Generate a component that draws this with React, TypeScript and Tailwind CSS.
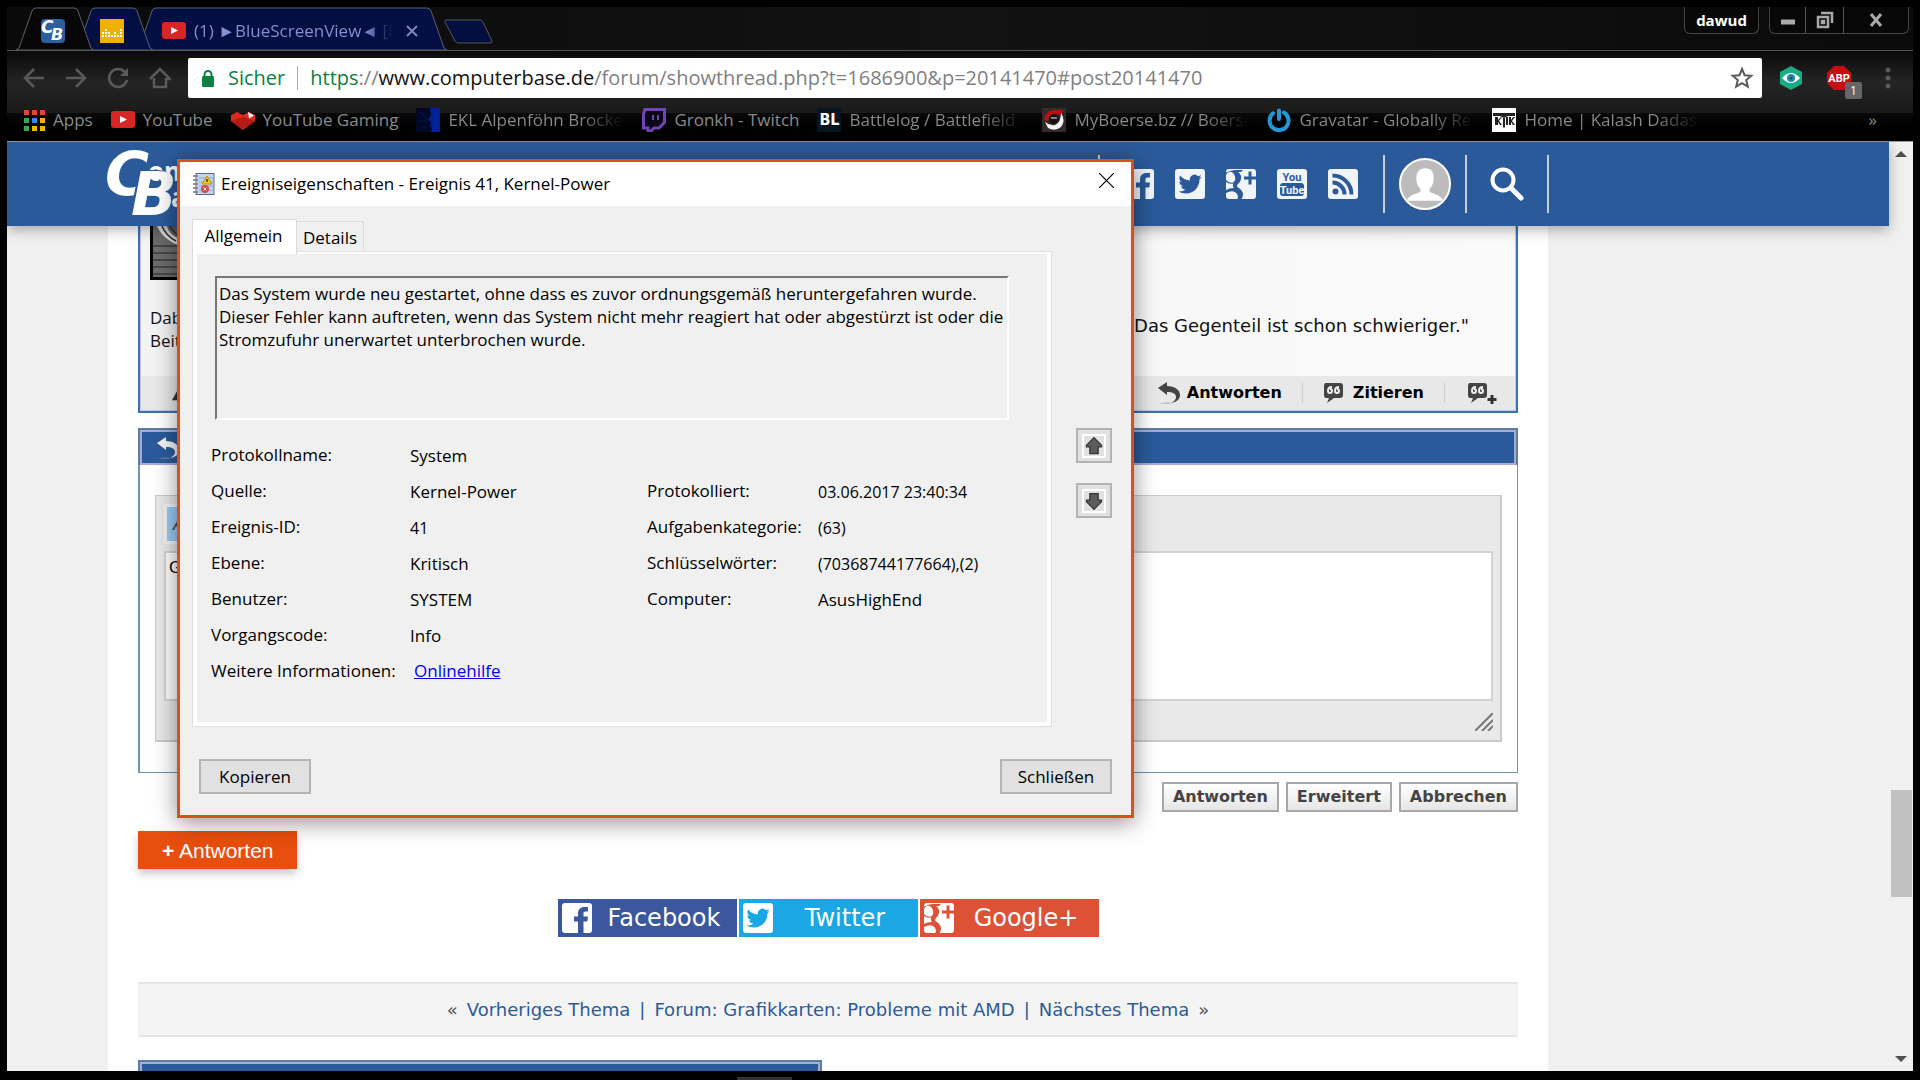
import React from "react";

type Kids = { children?: React.ReactNode };

/* ---------- Icons ---------- */

const YouTubeIcon = () => (
  <svg viewBox="0 0 24 24" className="size-6 shrink-0" aria-hidden="true">
    <rect x="0" y="3" width="24" height="17" rx="3" fill="#d92525" />
    <path d="M9 8l7 3.500-7 3.500z" fill="#fff" />
  </svg>
);

const CbIcon = () => (
  <span className="relative block size-6 rounded-sm bg-[#2b5f9f] font-['DejaVu_Sans',sans-serif] font-bold text-white italic leading-none" aria-hidden="true">
    <span className="absolute left-0 top-0 text-[17px]">C</span>
    <span className="absolute left-2.5 top-2 text-[16px]">B</span>
  </span>
);

const DeezerIcon = () => (
  <svg viewBox="0 0 24 24" className="size-6" aria-hidden="true">
    <rect width="24" height="24" fill="#f0b000" />
    <g fill="#fff">
      {[[2, 2], [5, 3], [8, 2], [11, 1], [14, 2], [17, 1], [20, 3]].map(([x, n]) =>
        Array.from({ length: n }, (_, i) => <rect key={`${x}-${i}`} x={x} y={16 - i * 3} width="2" height="2" />)
      )}
    </g>
  </svg>
);

const AppsIcon = () => {
  const colors = ["#e8433a", "#e8433a", "#e8433a", "#3aa757", "#2d8cf0", "#f4b400", "#3aa757", "#f4b400", "#f4b400"];
  return (
    <svg viewBox="0 0 21 21" className="size-[21px] shrink-0" aria-hidden="true">
      {colors.map((c, i) => (
        <rect key={i} x={(i % 3) * 8} y={Math.floor(i / 3) * 8} width="5" height="5" fill={c} />
      ))}
    </svg>
  );
};

const GamingIcon = () => (
  <svg viewBox="0 0 24 24" className="size-6 shrink-0" aria-hidden="true">
    <path d="M0 7l6-3 6 3 6-3 6 3v6l-12 9L0 13z" fill="#e0281f" />
    <path d="M0 13l12-4 12 4-12 9z" fill="#b31c14" />
    <path d="M17 4l6 3.500-5 3z" fill="#fff" />
  </svg>
);

const EklIcon = () => (
  <svg viewBox="0 0 24 24" className="size-6 shrink-0" aria-hidden="true">
    <rect width="24" height="24" fill="#020824" />
    <path d="M14 0h10v24H15l1-4-2-2 1-4-3-2 3-5z" fill="#00209a" />
    <path d="M2 3q6 2 8 8M3 14q4-4 8 1M4 21q3-4 7-2" stroke="#001a66" fill="none" />
  </svg>
);

const TwitchIcon = () => (
  <svg viewBox="0 0 24 24" className="size-6 shrink-0" aria-hidden="true">
    <path d="M3 1.500h19.500v13L17 20h-5l-3 3H6v-3H1.500V6z" fill="#0c0618" stroke="#6f45b5" strokeWidth="3" />
    <path d="M11 7v5M16 7v5" stroke="#6f45b5" strokeWidth="2" />
  </svg>
);

const BattlelogIcon = () => (
  <span className="grid size-6 shrink-0 place-items-center bg-[#061520] font-['DejaVu_Sans_Condensed','DejaVu_Sans',sans-serif] text-base font-bold leading-none text-white" aria-hidden="true">BL</span>
);

const BoerseIcon = () => (
  <svg viewBox="0 0 24 24" className="size-6 shrink-0" aria-hidden="true">
    <rect width="24" height="24" fill="#332b2b" />
    <path d="M2 12Q3 3 12 2h10l-3 5Q7 4 6 13z" fill="#c00d12" />
    <path d="M19 5q5 8 0 14-6 5-13 1l-3-6q5 4 10 3 6-3 6-12z" fill="#f4f4f4" />
    <circle cx="12" cy="11" r="5" fill="#171212" />
    <path d="M9 10h6" stroke="#8d7f7f" strokeWidth="2" />
  </svg>
);

const GravatarIcon = () => (
  <svg viewBox="0 0 24 24" className="size-6 shrink-0" fill="none" stroke="#2597d8" strokeWidth="4" strokeLinecap="round" aria-hidden="true">
    <path d="M12 2.500v8.500M17 4.500a9.500 9.500 0 1 1-11 .800" />
  </svg>
);

const KalashIcon = () => (
  <svg viewBox="0 0 24 24" className="size-6 shrink-0" aria-hidden="true">
    <rect width="24" height="24" fill="#fff" />
    <path d="M1 5h22v3h-7l-4 2-4-2H1zM3 9h3v3l3-3h1l-3 4 3 4H8l-2-3v3H3zM11 10h2v9l-1 1-1-1zM14 9h2v8h-2zM17 9h2v3l2-3h2l-3 4 3 4h-2l-2-3v3h-2z" fill="#222" />
  </svg>
);

const BIRD =
  "M23.953 4.57a10 10 0 01-2.825.775 4.958 4.958 0 002.163-2.723c-.951.555-2.005.959-3.127 1.184a4.92 4.92 0 00-8.384 4.482C7.69 8.095 4.067 6.13 1.64 3.162a4.822 4.822 0 00-.666 2.475c0 1.71.87 3.213 2.188 4.096a4.904 4.904 0 01-2.228-.616v.06a4.923 4.923 0 003.946 4.827 4.996 4.996 0 01-2.212.085 4.936 4.936 0 004.604 3.417 9.867 9.867 0 01-6.102 2.105c-.39 0-.779-.023-1.17-.067a13.995 13.995 0 007.557 2.209c9.053 0 13.998-7.496 13.998-13.985 0-.21 0-.42-.015-.63A9.935 9.935 0 0024 4.59z";

type Glyph = "facebook" | "twitter" | "google" | "youtube" | "rss";

const SocialIcon = ({ kind, fill, ink }: { kind: Glyph; fill: string; ink: string }) => (
  <svg viewBox="0 0 30 30" className="size-[30px] shrink-0" aria-hidden="true">
    <rect width="30" height="30" rx="3" fill={fill} />
    {kind === "facebook" && (
      <path d="M16 30V18.500h-4V13.500h4V10.500C16 6.500 18.500 4 22.500 4H26v4.500h-2.500c-1.500 0-2 .7-2 2v3H26l-.700 5h-3.800V30z" fill={ink} />
    )}
    {kind === "twitter" && <path d={BIRD} transform="translate(3.500 3.500) scale(.97)" fill={ink} />}
    {kind === "google" && (
      <g fill={ink}>
        <path d="M0 3.500Q5 1 9 1h8l-2 2h-3q4 3 3 7-.500 3-3 5-2 2 0 3.500 5 3 5 7 0 2.500-1.500 4.500h-4q1.500-4-2-6.500Q6 21 0 24v-3q3-2 8-2-2-2-.500-4.500Q3 15.500 0 13v-2q3 3.500 7 2.500 3-1.500 2-6Q7 2 3 3 1 3.500 0 6z" />
        <path d="M22.500 2.500h3v5H30v3h-4.500v5h-3v-5H18v-3h4.500z" />
      </g>
    )}
    {kind === "youtube" && (
      <g fontFamily="Roboto, sans-serif" fontWeight="700" textAnchor="middle">
        <rect x="3" y="14" width="24" height="13" rx="3" fill={ink} />
        <text x="15" y="12" fontSize="11" fill={ink}>You</text>
        <text x="15" y="25" fontSize="11" fill={fill}>Tube</text>
      </g>
    )}
    {kind === "rss" && (
      <g fill="none" stroke={ink} strokeWidth="4">
        <circle cx="7.500" cy="22.500" r="3" fill={ink} stroke="none" />
        <path d="M4.500 13.500A12 12 0 0 1 16.500 25.500M4.500 6.500A19 19 0 0 1 23.500 25.500" />
      </g>
    )}
  </svg>
);

const ReplyIcon = ({ color }: { color: string }) => (
  <svg viewBox="0 0 24 24" className="size-6 shrink-0" aria-hidden="true">
    <path d="M1 7l9-6v4c8 0 13 4 13 9 0 4-3 7-9 8 4-2 5-4 5-6 0-3-3-5-9-5v3z" fill={color} />
    <path d="M2 23q6-3 13-1l-2 1z" fill="#999" opacity=".5" />
  </svg>
);

const QuoteIcon = ({ plus = false }: { plus?: boolean }) => (
  <svg viewBox={plus ? "0 0 30 24" : "0 0 22 24"} className={plus ? "h-6 w-[30px]" : "h-6 w-[22px]"} aria-hidden="true">
    <path d="M3 2h14q3 0 3 3v9q0 3-3 3h-6l-7 5 2-5H3q-2 0-2-3V5q0-3 2-3z" fill="#444" />
    <path d="M9 6q-4 0-4 4a2 2 0 1 0 2-2M16 6q-4 0-4 4a2 2 0 1 0 2-2" stroke="#eee" strokeWidth="2" fill="none" />
    {plus && <path d="M25 14v9M20.500 18.500h9" stroke="#333" strokeWidth="3" />}
  </svg>
);

const ArrowIcon = ({ down = false }: { down?: boolean }) => (
  <svg viewBox="0 0 24 24" className={down ? "size-6 rotate-180 border-2 border-white" : "size-6 border-2 border-white"} aria-hidden="true">
    <path d="M12 2l9 9v2h-4v8H7v-8H3v-2z" fill="#5c5c5c" stroke="#333" strokeWidth="1.500" />
  </svg>
);

/* ---------- Browser chrome ---------- */

const TabShape = ({ width, fill }: { width: number; fill: string }) => (
  <svg viewBox={`0 0 ${width} 43`} className="absolute inset-0 size-full" aria-hidden="true">
    <path
      d={`M0 43l3-2L16 4q1-3 4-3h${width - 40}q3 0 4 3l13 37 3 2z`}
      fill={fill}
      stroke="#59606f"
    />
  </svg>
);

const tabBase = "relative flex h-[43px] shrink-0 items-center";

function TabStrip() {
  return (
    <div className="flex h-11 items-start border-b border-[#555] bg-[#0d0d0d] bg-linear-to-r from-[#0a0a0a] via-[#121212] to-[#0b0b0b] pl-[9px]">
      <button className={`${tabBase} z-20 w-[78px] justify-center pr-1 pt-1`} aria-label="ComputerBase">
        <TabShape width={78} fill="#070707" />
        <span className="relative"><CbIcon /></span>
      </button>
      <button className={`${tabBase} z-10 -ml-[19px] w-[78px] justify-center pr-1 pt-1`} aria-label="Deezer">
        <TabShape width={78} fill="#030e42" />
        <span className="relative"><DeezerIcon /></span>
      </button>
      <div className={`${tabBase} -ml-[17px] w-[311px] gap-2 pl-[26px] pt-1 text-[17px] text-[#7f8fd0]`}>
        <TabShape width={311} fill="#030e42" />
        <span className="relative"><YouTubeIcon /></span>
        <span className="relative w-[200px] overflow-hidden whitespace-nowrap bg-linear-to-r from-[#8493d4] from-85% to-transparent bg-clip-text text-transparent">
          (1) ►BlueScreenView◄ [B
        </span>
        <button className="relative ml-1" aria-label="Tab schließen">
          <svg viewBox="0 0 12 12" className="size-3" aria-hidden="true"><path d="M1 1l10 10M11 1L1 11" stroke="#7c89bd" strokeWidth="2" /></svg>
        </button>
      </div>
      <button className="-ml-1 mt-3" aria-label="Neuer Tab">
        <svg viewBox="0 0 50 25" className="block h-[25px] w-[50px]" aria-hidden="true">
          <path d="M3 1h34q2 0 3 2l9 19q1 2-2 2H16q-3 0-4-2L2 3Q1 1 3 1z" fill="#03103f" stroke="#555" />
        </svg>
      </button>
      <div className="ml-auto mr-1 flex h-[27px] gap-2.5">
        <button className="w-[75px] rounded-b-md border border-t-0 border-[#444] bg-[#080808] text-[15px] font-bold text-white">dawud</button>
        <div className="flex divide-x divide-[#555] rounded-b-md border border-t-0 border-[#444] bg-[#080808]">
          <button className="grid w-[36px] place-items-center" aria-label="Minimieren">
            <svg viewBox="0 0 16 16" className="size-4" aria-hidden="true"><path d="M1 10h14" stroke="#aaa" strokeWidth="5" /></svg>
          </button>
          <button className="grid w-[38px] place-items-center" aria-label="Wiederherstellen">
            <svg viewBox="0 0 18 18" className="size-[18px]" fill="none" stroke="#aaa" strokeWidth="2.500" aria-hidden="true">
              <path d="M2 6h10v10H2zM5 2h11v10M6 10h2v2H6z" />
            </svg>
          </button>
          <button className="grid w-[64px] place-items-center" aria-label="Fenster schließen">
            <svg viewBox="0 0 14 14" className="size-3.5" aria-hidden="true"><path d="M2 1l10 12M12 1L2 13" stroke="#aaa" strokeWidth="3" /></svg>
          </button>
        </div>
      </div>
    </div>
  );
}

const NavButton = ({ label, children }: Kids & { label: string }) => (
  <button aria-label={label} className="w-[22px]">
    <svg viewBox="0 0 22 22" className="size-[22px]" fill="none" stroke="#5a5a5a" strokeWidth="2.500" aria-hidden="true">{children}</svg>
  </button>
);

function Toolbar() {
  return (
    <div className="flex h-[62px] items-center bg-linear-to-b from-[#0a0a0a] via-[#242424] to-[#1a1a1a] pl-4 pr-[22px] pb-2">
      <nav className="flex gap-5">
        <NavButton label="Zurück"><path d="M21 11H2M11 2l-9 9 9 9" /></NavButton>
        <NavButton label="Vor"><path d="M1 11h19M11 2l9 9-9 9" /></NavButton>
        <NavButton label="Neu laden"><path d="M18 5a9 9 0 1 0 2 8" /><path d="M21 1v8h-8z" fill="#5a5a5a" stroke="none" /></NavButton>
        <NavButton label="Startseite"><path d="M5 11v9h12v-9M1 12L11 2l10 10h-4" /></NavButton>
      </nav>
      <div className="ml-[17px] flex h-10 min-w-0 flex-1 items-center rounded-xs bg-white pl-3.5 pr-2 text-xl">
        <svg viewBox="0 0 12 17" className="mr-3.5 h-[17px] w-3 shrink-0" aria-hidden="true">
          <rect y="6" width="12" height="11" rx="1" fill="#0b8043" />
          <path d="M2.500 7V4.500a3.500 3.500 0 0 1 7 0V7" fill="none" stroke="#0b8043" strokeWidth="2" />
        </svg>
        <span className="text-[#0b8043]">Sicher</span>
        <span className="mx-3 h-6 w-px bg-[#aaa]" />
        <a href="#post20141470" className="flex-1 truncate text-[#7f7f7f]">
          <span className="text-[#0b8043]">https</span>://<span className="text-[#111]">www.computerbase.de</span>/forum/showthread.php?t=1686900&amp;p=20141470#post20141470
        </a>
        <button aria-label="Lesezeichen">
          <svg viewBox="0 0 24 24" className="size-6" fill="none" stroke="#5a5a5a" strokeWidth="2" aria-hidden="true">
            <path d="M12 3l2.600 6.200 6.700.500-5.100 4.400 1.600 6.600L12 17.200l-5.800 3.500 1.600-6.600-5.100-4.400 6.700-.500z" />
          </svg>
        </button>
      </div>
      <div className="ml-4 flex items-center">
        <button aria-label="Blocker">
          <svg viewBox="0 0 26 26" className="size-[26px]" aria-hidden="true">
            <path d="M13 1l11 6v12l-11 6-11-6V7z" fill="#17ad84" />
            <path d="M4 13q9-10 18 0-9 10-18 0z" fill="#fff" />
            <circle cx="13" cy="13" r="4" fill="#2187b8" />
            <circle cx="13" cy="13" r="1.500" fill="#063" />
          </svg>
        </button>
        <button className="relative ml-[22px]" aria-label="Adblock Plus">
          <svg viewBox="0 0 26 26" className="size-[26px]" aria-hidden="true">
            <path d="M8 1h10l7 7v10l-7 7H8l-7-7V8z" fill="#c70d12" />
            <text x="13" y="17" fontSize="11" fontWeight="700" textAnchor="middle" fill="#fff" fontFamily="Roboto, sans-serif">ABP</text>
          </svg>
          <span className="absolute -right-2.5 -bottom-2 grid size-[17px] place-items-center rounded-xs bg-[#666] text-xs text-white">1</span>
        </button>
        <button className="ml-[33px]" aria-label="Menü">
          <svg viewBox="0 0 6 24" className="h-6 w-1.5" fill="#5a5a5a" aria-hidden="true">
            <circle cx="3" cy="4" r="2.500" /><circle cx="3" cy="12" r="2.500" /><circle cx="3" cy="20" r="2.500" />
          </svg>
        </button>
      </div>
    </div>
  );
}

const Bookmark = ({ icon, children, fade }: Kids & { icon: React.ReactNode; fade?: string }) => (
  <a href="#bookmark" className={`flex shrink-0 items-center gap-2 ${fade ?? ""}`}>
    {icon}
    {fade ? (
      <span className="min-w-0 flex-1 overflow-hidden whitespace-nowrap bg-linear-to-r from-[#8a8a8a] from-75% to-transparent bg-clip-text text-transparent">{children}</span>
    ) : (
      <span className="whitespace-nowrap">{children}</span>
    )}
  </a>
);

function Bookmarks() {
  return (
    <div className="flex h-[29px] items-start border-b border-[#9a9aa6] bg-linear-to-b from-[#0a0a0a] to-black pl-[17px] pr-[36px] text-[17px] leading-6 text-[#8a8a8a]">
      <div className="-mt-[5px] flex min-w-0 flex-1 items-center gap-[18px]">
        <Bookmark icon={<AppsIcon />}>Apps</Bookmark>
        <Bookmark icon={<YouTubeIcon />}>YouTube</Bookmark>
        <Bookmark icon={<GamingIcon />}>YouTube Gaming</Bookmark>
        <Bookmark icon={<EklIcon />} fade="w-[208px]">EKL Alpenföhn Brocke</Bookmark>
        <Bookmark icon={<TwitchIcon />}>Gronkh - Twitch</Bookmark>
        <Bookmark icon={<BattlelogIcon />} fade="w-[207px]">Battlelog / Battlefield 4</Bookmark>
        <Bookmark icon={<BoerseIcon />} fade="w-[207px]">MyBoerse.bz // Boerse</Bookmark>
        <Bookmark icon={<GravatarIcon />} fade="w-[207px]">Gravatar - Globally Re</Bookmark>
        <Bookmark icon={<KalashIcon />} fade="w-[207px]">Home | Kalash Dadash</Bookmark>
        <button className="ml-auto" aria-label="Weitere Lesezeichen">»</button>
      </div>
    </div>
  );
}

/* ---------- Forum page ---------- */

function SiteHeader() {
  return (
    <header className="relative z-10 flex h-[84px] items-center bg-[#2b5a9b] pl-[101px] pr-[340px] shadow-[0_4px_12px_rgba(0,0,0,0.3)]">
      <a href="#home" aria-label="ComputerBase" className="relative h-[72px] w-[180px] font-['DejaVu_Sans',sans-serif] font-bold leading-none text-white">
        <span className="absolute left-10 top-2.5 font-['Open_Sans',sans-serif] text-[26px]">omputer</span>
        <span className="absolute left-[63px] top-9 font-['Open_Sans',sans-serif] text-[26px]">ase</span>
        <span className="absolute -left-[3px] -top-1 text-[60px] italic">C</span>
        <span className="absolute left-[23px] top-4 text-[60px] italic [text-shadow:-2px_-1px_0_#2b5a9b]">B</span>
      </a>
      <div className="ml-auto flex h-[58px] items-center border-x-2 border-[#c9ced8] px-6">
        <div className="flex gap-[21px] pr-px">
          {(["facebook", "twitter", "google", "youtube", "rss"] as Glyph[]).map((k) => (
            <a key={k} href={`#${k}`} aria-label={k}><SocialIcon kind={k} fill="#f1f5fa" ink="#2b5a9b" /></a>
          ))}
        </div>
      </div>
      <div className="flex h-[58px] items-center border-r-2 border-[#c9ced8] px-3.5">
        <a href="#profil" aria-label="Profil" className="size-[52px] overflow-hidden rounded-full border-2 border-white bg-[#bcbcbc]">
          <svg viewBox="0 0 47 47" className="size-full" fill="#fff" aria-hidden="true">
            <path d="M24 8c6 0 8 4 8 10 0 5-2 8-4 10v3c3 2 12 3 13 9H6c1-6 10-7 13-9v-3c-2-2-4-5-4-10 0-6 3-10 9-10z" />
          </svg>
        </a>
      </div>
      <div className="flex h-[58px] items-center border-r-2 border-[#c9ced8] px-[23px]">
        <button aria-label="Suche">
          <svg viewBox="0 0 34 34" className="size-[34px]" fill="none" stroke="#fff" aria-hidden="true">
            <circle cx="13" cy="13" r="10.500" strokeWidth="4" />
            <path d="M21 21l10 10" strokeWidth="5" strokeLinecap="round" />
          </svg>
        </button>
      </div>
    </header>
  );
}

function Post() {
  return (
    <article className="border-2 border-t-0 border-[#3a73b3] bg-[#fafafa]">
      <div className="border border-t-0 border-[#c5c8e6]">
        <div className="flex h-[150px] justify-between bg-linear-to-r from-[#f3f3f3] to-[#fafafa] text-lg leading-[23px] text-[#111]">
          <div className="pl-[9px]">
            <svg viewBox="0 0 120 54" className="mb-[26px] h-[54px] w-[120px]" aria-hidden="true">
              <rect width="120" height="54" fill="#000" />
              <rect x="3" width="114" height="51" fill="#6b6b6b" />
              <path d="M3 20h114M3 27h114M3 34h114M3 41h114M3 48h114" stroke="#464646" strokeWidth="2" />
              <path d="M7 0q6 14 24 20v-6Q18 8 17 0z" fill="#e2e2e2" />
              <path d="M12 0q4 10 14 15M20 0q3 6 8 10" stroke="#333" strokeWidth="1.500" fill="none" />
            </svg>
            <p className="font-['Open_Sans',sans-serif] text-[17px] leading-[23px]">Dabei seit:<br />Beiträge:</p>
          </div>
          <p className="self-end pr-[46px] pb-[39px]">Das Gegenteil ist schon schwieriger."</p>
        </div>
        <footer className="flex h-[34px] items-center justify-between bg-[#e8e8e8] pl-[29px] pr-[18px] font-bold">
          <svg viewBox="0 0 22 20" className="h-4 w-5" aria-hidden="true"><path d="M11 1l10 18H1z" fill="#333" /></svg>
          <div className="flex items-center">
            <a href="#antworten" className="flex items-center gap-1.5"><ReplyIcon color="#444" />Antworten</a>
            <span className="mx-5 h-5 w-px bg-[#ccc]" />
            <a href="#zitieren" className="flex items-center gap-2"><QuoteIcon />Zitieren</a>
            <span className="mr-[22px] ml-5 h-5 w-px bg-[#ccc]" />
            <a href="#multizitat" aria-label="Mehrfach zitieren"><QuoteIcon plus /></a>
          </div>
        </footer>
      </div>
    </article>
  );
}

function ReplyForm() {
  return (
    <form className="mt-[15px]" onSubmit={(e) => e.preventDefault()}>
      <div className="h-[37px] border-2 border-b-0 border-[#5b7f9d]">
        <div className="flex h-full items-center border-2 border-[#a9a9d6] bg-[#2b5a9b] pl-3.5"><ReplyIcon color="#f5f5f5" /></div>
      </div>
      <div className="border border-l-2 border-t-0 border-[#6b94b3] bg-white px-[15px] pt-[30px] pb-[30px]">
        <div className="border-2 border-t border-l border-[#cacaca] bg-[#e9e9e9] pl-2 pr-[7px] pb-[9px] pt-2">
          <button type="button" aria-label="Formatierung" className="mb-[7px] block h-10 w-10 border-3 border-[#f4f4f4] bg-[#99ccf5] pl-1.5 text-left text-lg leading-none text-[#444] italic">A</button>
          <textarea
            aria-label="Nachricht"
            defaultValue="Gibt es neue Erkenntnisse?"
            className="block h-[150px] w-full resize-none border-2 border-[#d3d3d3] bg-white px-[3px] py-0.5 font-['Liberation_Sans',sans-serif] text-[17px] outline-none"
          />
          <svg viewBox="0 0 18 18" className="mt-3 ml-auto size-[18px]" stroke="#777" strokeWidth="2" aria-hidden="true"><path d="M0 18L18 0M7 18L18 7M13 18l5-5" /></svg>
        </div>
      </div>
      <div className="mt-[9px] flex justify-end gap-[7px] font-bold text-[#444]">
        {["Antworten", "Erweitert", "Abbrechen"].map((t) => (
          <button key={t} className="h-[30px] border-2 border-[#a8a8a8] bg-linear-to-b from-white to-[#e6e6e6] px-[9px] leading-none">{t}</button>
        ))}
      </div>
    </form>
  );
}

const Share = ({ kind, label, tone, ink }: { kind: Glyph; label: string; tone: string; ink: string }) => (
  <a href={`#${kind}`} className={`flex h-[38px] w-[179px] items-center pl-1 text-[24px] text-white ${tone}`}>
    <SocialIcon kind={kind} fill="#fff" ink={ink} />
    <span className="flex-1 text-center">{label}</span>
  </a>
);

function ForumPage() {
  return (
    <div className="flex min-h-0 flex-1">
      <div className="flex min-w-0 flex-1 flex-col bg-[#f0f0f0]">
        <SiteHeader />
        <main className="mr-[341px] ml-[101px] min-h-0 flex-1 overflow-hidden bg-white px-[30px] font-['DejaVu_Sans',sans-serif] text-base">
          <Post />
          <ReplyForm />
          <button className="mt-[19px] block h-[38px] bg-[#e84e0e] pl-6 pr-[23px] font-['Liberation_Sans',sans-serif] text-[21px] leading-none text-white shadow-[0_5px_8px_rgba(0,0,0,0.2)]">
            <b>+</b> Antworten
          </button>
          <div className="mt-[30px] flex justify-center gap-0.5">
            <Share kind="facebook" label="Facebook" tone="bg-[#3b579d]" ink="#3b579d" />
            <Share kind="twitter" label="Twitter" tone="bg-[#1aa7e4]" ink="#1aa7e4" />
            <Share kind="google" label="Google+" tone="bg-[#dd5137]" ink="#dd5137" />
          </div>
          <nav className="mt-[45px] flex h-[55px] items-center justify-center gap-[9px] border-y-2 border-[#e6e6e6] bg-[#f4f4f4] text-lg text-[#2b5a9b]">
            <span className="text-[#555]">«</span>
            <a href="#zurueck">Vorheriges Thema</a>
            <span>|</span>
            <a href="#forum">Forum: Grafikkarten: Probleme mit AMD</a>
            <span>|</span>
            <a href="#weiter">Nächstes Thema</a>
            <span className="text-[#555]">»</span>
          </nav>
          <div className="mt-[23px] h-10 w-[684px] border-2 border-[#5b7f9d]">
            <div className="h-full border-2 border-[#a9a9d6] bg-[#2b5a9b]" />
          </div>
        </main>
      </div>
      <div className="flex w-6 flex-col items-center bg-[#f0f0f0]">
        <button aria-label="Nach oben" className="grid h-6 place-items-center">
          <svg viewBox="0 0 12 6" className="h-1.5 w-3" fill="#4f4f4f" aria-hidden="true"><path d="M6 0l6 6H0z" /></svg>
        </button>
        <div className="flex-[624]" />
        <div className="h-[107px] w-[21px] bg-[#c1c1c1]" />
        <div className="flex-[150]" />
        <button aria-label="Nach unten" className="grid h-6 place-items-center">
          <svg viewBox="0 0 12 6" className="h-1.5 w-3" fill="#4f4f4f" aria-hidden="true"><path d="M6 6L0 0h12z" /></svg>
        </button>
      </div>
    </div>
  );
}

/* ---------- Event properties dialog ---------- */

const Label = ({ children }: Kids) => <dt className="whitespace-nowrap leading-[36px]">{children}</dt>;
const Value = ({ children, wide = false, numeric = false }: Kids & { wide?: boolean; numeric?: boolean }) => (
  <dd className={`${wide ? "col-span-3" : ""} ${numeric ? "text-base leading-[38px]" : "leading-[38px]"}`}>{children}</dd>
);

const winButton = "grid h-[35px] place-items-center border-2 border-[#b4b4b4] bg-[#e1e1e1]";

function EventDialog() {
  return (
    <section
      role="dialog"
      aria-label="Ereigniseigenschaften"
      className="absolute left-[177px] top-[159px] z-30 w-[957px] border-3 border-[#d94f1e] bg-[#f0f0f0] text-[17px] text-black shadow-[0_4px_22px_rgba(0,0,0,0.45)]"
    >
      <header className="flex h-11 items-center bg-white pl-[13px] pr-[17px]">
        <svg viewBox="0 0 22 22" className="size-[22px]" aria-hidden="true">
          <rect x="3" y=".5" width="18" height="21" fill="#c5d4ec" stroke="#5c6c98" />
          <path d="M6 5h14M6 9h14M6 13h14M6 17h14" stroke="#8fa8d8" />
          <path d="M0 3h5M0 7h5M0 11h5M0 15h5M0 19h5" stroke="#777" strokeWidth="1.500" />
          <path d="M14 3l5 8H9z" fill="#f4cc1c" stroke="#b99400" />
          <path d="M14 6v3" stroke="#333" strokeWidth="1.500" />
          <circle cx="12" cy="16" r="4" fill="#d8474a" />
          <path d="M10.500 14.500l3 3M13.500 14.500l-3 3" stroke="#fff" />
        </svg>
        <h1 className="ml-1.5">Ereigniseigenschaften - Ereignis 41, Kernel-Power</h1>
        <button className="ml-auto mb-2" aria-label="Dialog schließen">
          <svg viewBox="0 0 15 15" className="size-[15px]" stroke="#000" strokeWidth="1.200" aria-hidden="true"><path d="M0 0l15 15M15 0L0 15" /></svg>
        </button>
      </header>

      <div className="flex pl-3 pr-[19px] pt-[13px]">
        <div className="min-w-0 flex-1">
          <div role="tablist" className="relative flex h-8 items-end">
            <button role="tab" aria-selected="true" className="z-10 -mb-[3px] h-[35px] w-[105px] border border-b-0 border-[#dcdcdc] bg-white pr-0.5 pb-0.5">Allgemein</button>
            <button role="tab" aria-selected="false" className="h-[30px] w-[67px] border border-b-0 border-l-0 border-[#dcdcdc] pt-0.5">Details</button>
          </div>
          <div className="border border-[#dfdfdf] bg-white p-1 pt-0.5">
            <div className="bg-[#f0f0f0] pb-[33px] pl-[18px] pr-[38px] pt-[22px]">
              <textarea
                readOnly
                aria-label="Beschreibung"
                value={
                  "Das System wurde neu gestartet, ohne dass es zuvor ordnungsgemäß heruntergefahren wurde.\nDieser Fehler kann auftreten, wenn das System nicht mehr reagiert hat oder abgestürzt ist oder die\nStromzufuhr unerwartet unterbrochen wurde."
                }
                className="block h-36 w-full resize-none overflow-hidden whitespace-pre border-2 border-t-[#777] border-r-white border-b-white border-l-[#777] bg-transparent pl-0.5 pt-1 leading-[23px] outline-none"
              />
              <dl className="-ml-1 mt-[17px] grid auto-rows-[36px] grid-cols-[199px_237px_171px_1fr]">
                <Label>Protokollname:</Label><Value wide>System</Value>
                <Label>Quelle:</Label><Value>Kernel-Power</Value>
                <Label>Protokolliert:</Label><Value numeric>03.06.2017 23:40:34</Value>
                <Label>Ereignis-ID:</Label><Value numeric>41</Value>
                <Label>Aufgabenkategorie:</Label><Value numeric>(63)</Value>
                <Label>Ebene:</Label><Value>Kritisch</Value>
                <Label>Schlüsselwörter:</Label><Value numeric>(70368744177664),(2)</Value>
                <Label>Benutzer:</Label><Value>SYSTEM</Value>
                <Label>Computer:</Label><Value>AsusHighEnd</Value>
                <Label>Vorgangscode:</Label><Value wide>Info</Value>
                <Label>Weitere Informationen:</Label>
                <dd className="col-span-3 pl-1 leading-[36px]"><a href="#onlinehilfe" className="text-[#0000f0] underline">Onlinehilfe</a></dd>
              </dl>
            </div>
          </div>
        </div>
        <div className="ml-6 mt-[209px] flex w-9 flex-col gap-5">
          <button className={winButton} aria-label="Vorheriges Ereignis"><ArrowIcon /></button>
          <button className={winButton} aria-label="Nächstes Ereignis"><ArrowIcon down /></button>
        </div>
      </div>

      <footer className="flex justify-between px-[19px] pb-[21px] pt-8">
        <button className={`${winButton} w-28`}>Kopieren</button>
        <button className={`${winButton} w-28`}>Schließen</button>
      </footer>
    </section>
  );
}

export default function App() {
  return (
    <div className="relative flex h-screen flex-col overflow-hidden bg-black px-[7px] pb-[9px] pt-[7px] font-['Open_Sans',sans-serif]">
      <TabStrip />
      <Toolbar />
      <Bookmarks />
      <ForumPage />
      <EventDialog />
      <div className="absolute bottom-0 left-[737px] h-[3px] w-[55px] bg-[#333]" />
    </div>
  );
}
